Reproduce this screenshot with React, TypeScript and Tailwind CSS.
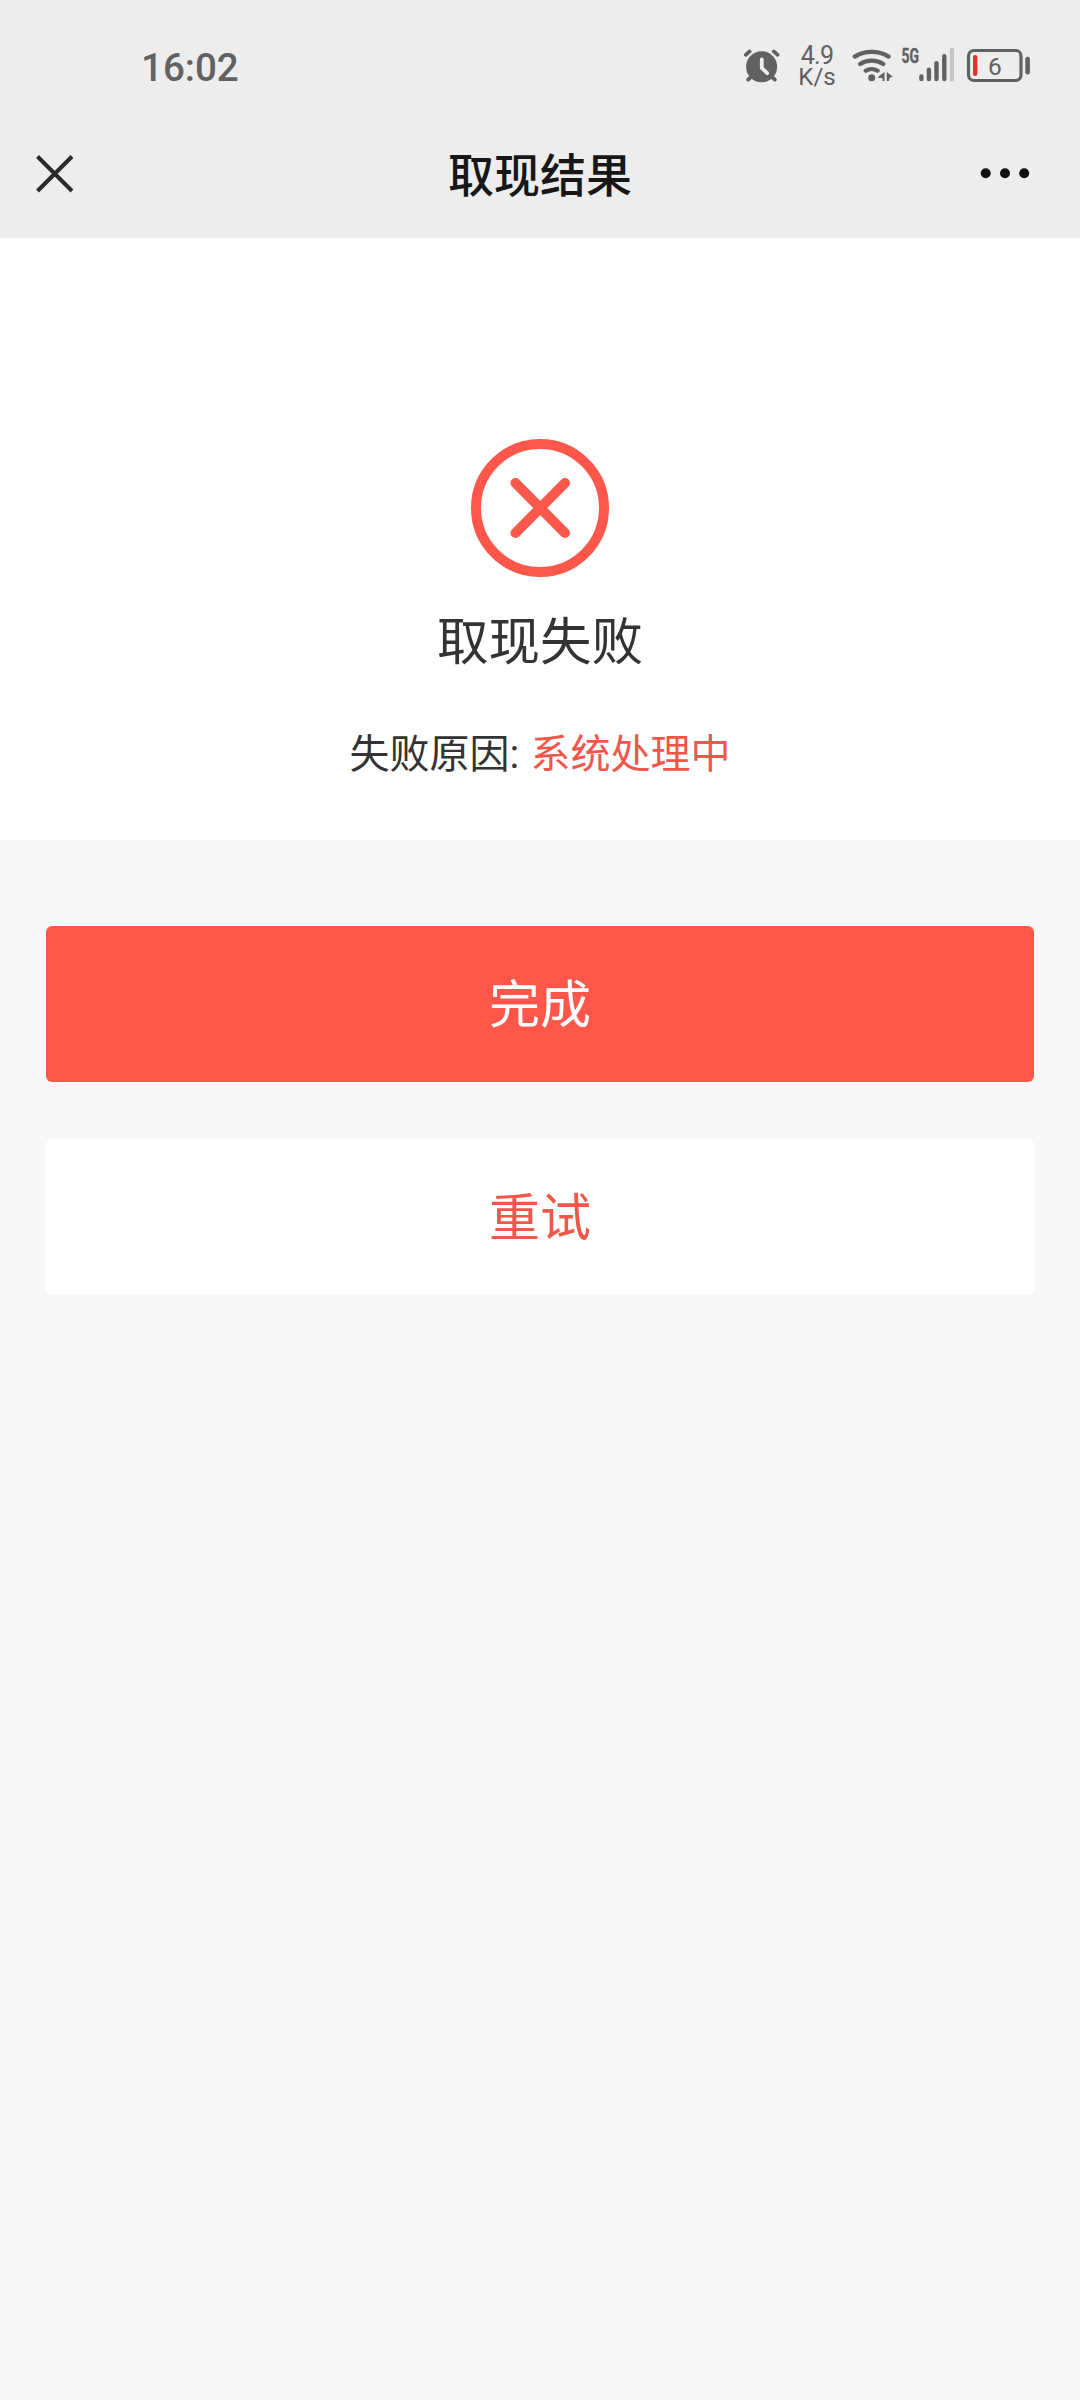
import React from "react";

const StatusBar = () => {
    return (
        <div className="flex h-[110px] items-start justify-between pl-[141px] pr-12 pt-11 font-[Roboto,sans-serif] text-[#616161]">
            <span className="pt-px text-[38.5px] font-medium leading-[46px]">16:02</span>
            <div className="flex">
                <svg className="h-11 w-10" viewBox="742 44 40 44" fill="none" strokeLinecap="round">
                    <circle cx="761.6" cy="66.7" r="15.5" fill="#616161" />
                    <path d="M745.8 54.800l3.800-3.400M777.600 54.800l-3.800-3.400M748.200 79.600l4-4M774.800 79.600l-4-4" stroke="#616161" strokeWidth="3.800" />
                    <path d="M761.800 59.500v8.500l5.400 5.200" stroke="#ededed" strokeWidth="3.800" />
                </svg>
                <div className="ml-[17px] flex w-9 flex-col items-center text-[24px] leading-[22px]">
                    <span className="mt-px text-[25px] tracking-[-0.8px]">4.9</span>
                    <span className="-mt-px">K/s</span>
                </div>
                <svg className="ml-[17px] h-11 w-11" viewBox="852 44 44 44" fill="none" stroke="#616161" strokeWidth="4.300" strokeLinecap="round">
                    <path d="M854.800 56.600c10-6.200 23.800-6.200 33.800 0M860.200 64c6.600-4.400 16.400-4.400 23 0M865.800 70.700c3.400-2.200 8.400-2.200 11.800 0" />
                    <circle cx="871.700" cy="77.700" r="3.500" fill="#616161" stroke="none" />
                    <path d="M884.500 72v9h-2v-3h-4v-1.500zM886.800 72l6 4.800-3 .8-1 3.400h-2z" fill="#616161" stroke="none" />
                </svg>
                <svg className="ml-1 h-11 w-14" viewBox="900 44 56 44" fill="#616161">
                    <text x="901.500" y="62.500" fontSize="19.500" fontWeight="700" textLength="17.500" lengthAdjust="spacingAndGlyphs" stroke="#616161" strokeWidth="0.400">5G</text>
                    <rect x="919.200" y="74.300" width="4.400" height="6.900" rx="2.200" />
                    <rect x="926.700" y="67.600" width="4.400" height="13.600" rx="2.200" />
                    <rect x="934.300" y="61" width="4.400" height="20.200" rx="2.200" />
                    <rect x="942.100" y="54" width="4.400" height="27.200" rx="2.200" />
                    <rect x="949.900" y="48" width="4.200" height="33.200" rx="1" fill="#c6c6c6" />
                </svg>
                <svg className="ml-2.5 h-11 w-[66px]" viewBox="966 44 66 44" fill="#616161">
                    <rect x="968.500" y="50.500" width="52.500" height="30" rx="5.500" fill="none" stroke="#616161" strokeWidth="3.200" />
                    <rect x="973" y="55" width="4.400" height="21" rx="2" fill="#e3342c" />
                    <text x="988" y="75" fontSize="24.500">6</text>
                    <rect x="1025.300" y="56.700" width="4.600" height="17.700" rx="2" />
                </svg>
            </div>
        </div>
    );
};

const NavBar = () => {
    return (
        <div className="flex h-32 items-center justify-between px-9">
            <svg className="h-[38px] w-[76px]" viewBox="0 0 76 38" stroke="#2a2a2a" strokeWidth="4">
                <path d="M1.500 1.500l34.500 34.500M36 1.500L1.500 36" />
            </svg>
            <h1 className="pb-1 text-[46px] font-medium leading-[60px] text-[#171717]">取现结果</h1>
            <svg className="h-[38px] w-[76px]" viewBox="0 0 76 38" fill="#111111">
                <circle cx="17.700" cy="18.300" r="5" />
                <circle cx="37" cy="18.300" r="5" />
                <circle cx="56.200" cy="18.300" r="5" />
            </svg>
        </div>
    );
};

const App = () => {
    return (
        <div className="flex min-h-[2400px] w-[1080px] flex-col bg-[#f7f7f7] font-['Noto_Sans_CJK_SC',sans-serif]">
            <header className="bg-[#ededed]">
                <StatusBar />
                <NavBar />
            </header>
            <section className="flex h-[602px] flex-col items-center bg-white pt-[201px] text-[#333333]">
                <svg className="h-[138px] w-[138px]" viewBox="0 0 138 138" fill="none" stroke="#fc574a" strokeWidth="10" strokeLinecap="round">
                    <circle cx="69" cy="69" r="64" />
                    <path d="M44.500 44l49.500 50M94 44l-49.500 50" />
                </svg>
                <h2 className="mt-[23px] text-[51.5px] leading-[76px]">取现失败</h2>
                <p className="mt-[45px] text-[40px] leading-[60px]">
                    失败原因<span className="font-[Roboto,sans-serif] tracking-[0.7px]">: </span>
                    <span className="text-[#f0564a]">系统处理中</span>
                </p>
            </section>
            <div className="flex flex-col gap-[57px] px-[46px] pt-[86px]">
                <button className="h-[156px] rounded-md bg-[#fe574a] pb-1.5 text-[51px] text-white">完成</button>
                <button className="h-[156px] rounded-md bg-white pb-1.5 text-[51px] text-[#f0564a]">重试</button>
            </div>
        </div>
    );
};

export default App;
